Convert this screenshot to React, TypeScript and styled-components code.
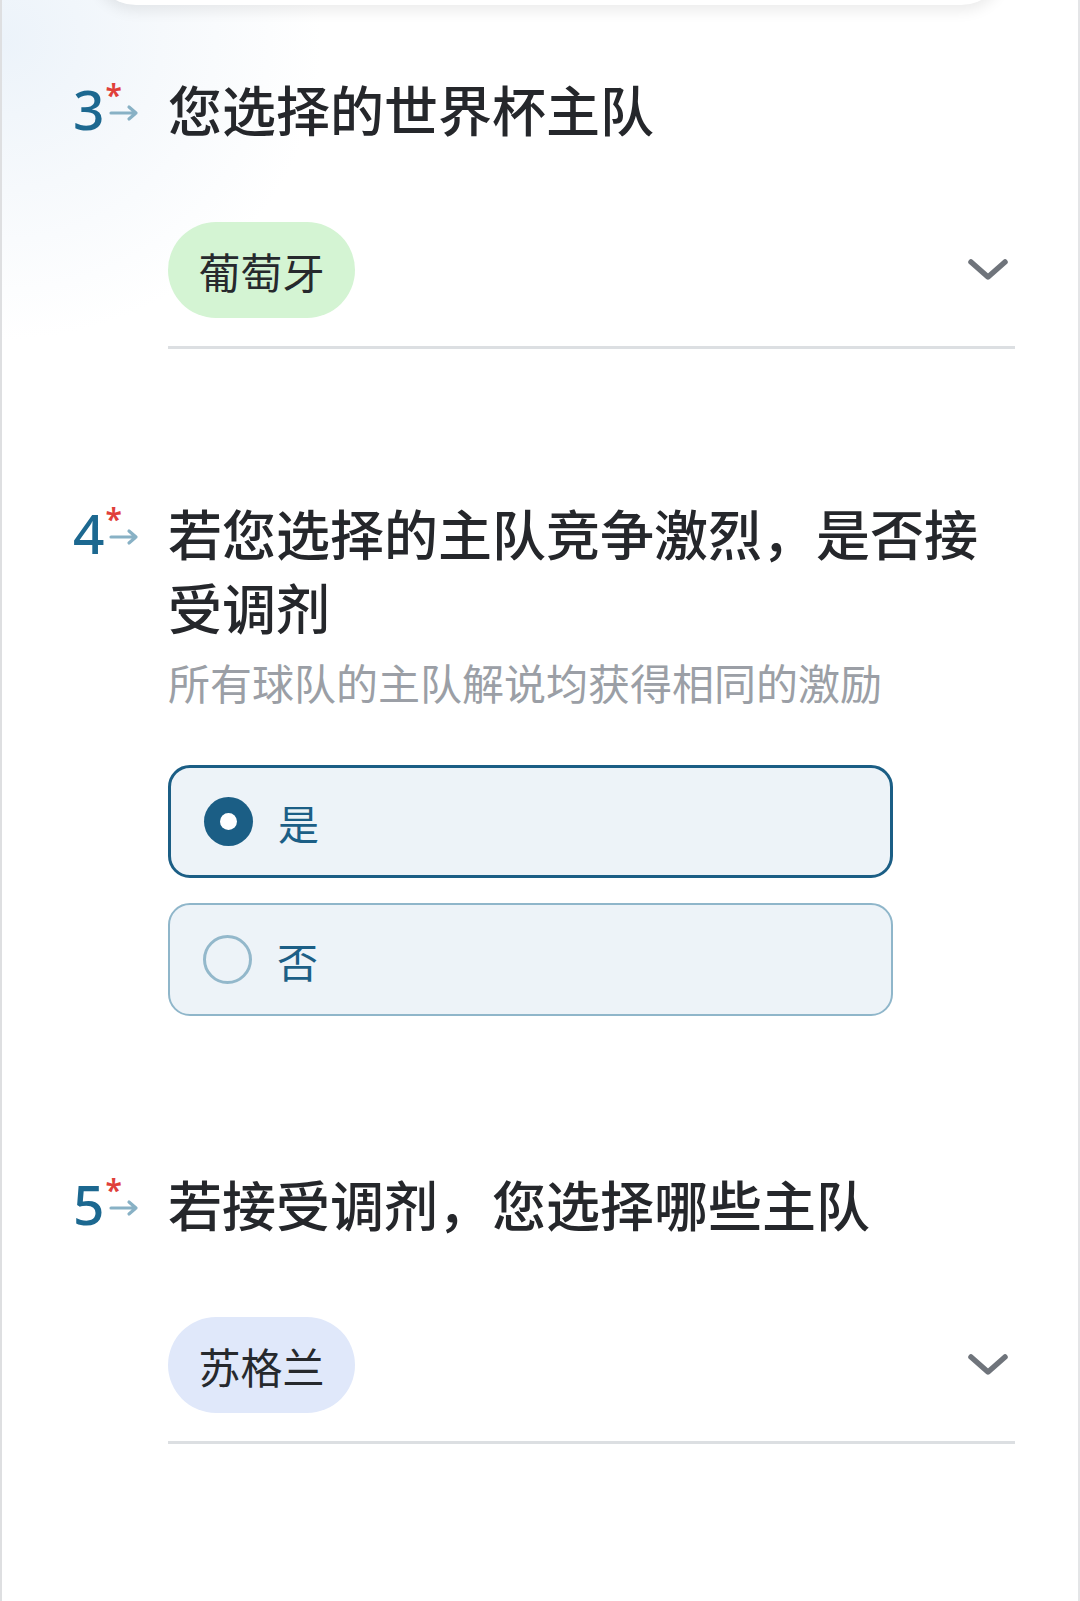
import React from 'react'
import styled, { createGlobalStyle } from 'styled-components'

const GlobalStyle = createGlobalStyle`
  html, body {
    margin: 0;
    padding: 0;
    background: #fff;
  }
  body {
    font-family: 'Noto Sans', 'Noto Sans CJK SC', sans-serif;
  }
`

const Page = styled.div`
  box-sizing: border-box;
  width: 1080px;
  height: 1601px;
  overflow: hidden;
  border-left: 2px solid #dedfe1;
  border-right: 2px solid #e4e5e7;
  background:
    radial-gradient(ellipse 320px 300px at 0 40px, #ecf3fa 0%, #f6f9fc 50%, rgba(255, 255, 255, 0) 100%),
    #fff;
  display: flex;
  flex-direction: column;
`

const TopCard = styled.div`
  margin: -42px 0 0 90px;
  width: 913px;
  height: 47px;
  background: #fff;
  border-radius: 0 0 44px 44px;
  box-shadow: 0 6px 14px rgba(0, 0, 0, 0.08);
  flex-shrink: 0;
`

const Section = styled.section<{ $top: number }>`
  display: grid;
  grid-template-columns: 95px 847px;
  padding: ${(p) => p.$top}px 0 0 71px;
  flex-shrink: 0;
`

const Marker = styled.div`
  display: flex;
  align-items: flex-start;
  height: 74px;
`

const Digit = styled.span`
  font-family: 'Noto Sans', sans-serif;
  font-size: 55px;
  line-height: 74px;
  font-weight: 500;
  color: #1c6890;
`

const Marks = styled.span`
  display: flex;
  flex-direction: column;
  padding: 8px 0 0 1px;
`

const Asterisk = styled.span`
  display: block;
  height: 24px;
  font-family: 'Noto Sans', sans-serif;
  font-size: 30px;
  line-height: 30px;
  font-weight: 600;
  color: #e0403a;
`

const ArrowBox = styled.span`
  display: block;
  margin-left: 3px;
`

const Body = styled.div`
  grid-column: 2;
`

const Title = styled.h2`
  grid-column: 2;
  margin: 0;
  font-family: 'Noto Sans CJK SC', 'Noto Sans', sans-serif;
  font-size: 54px;
  line-height: 74px;
  font-weight: 500;
  color: #25272b;
  min-height: 74px;
`

const Hint = styled.p`
  margin: 13px 0 0;
  font-family: 'Noto Sans CJK SC', sans-serif;
  font-size: 42px;
  line-height: 50px;
  color: #9b9fa6;
`

const SelectRow = styled.div`
  margin-top: 76px;
  display: flex;
  align-items: center;
  justify-content: space-between;
  padding: 0 6px 28px 0;
  border-bottom: 3px solid #dcdfe2;
`

const Chip = styled.span<{ $tone: 'green' | 'blue' }>`
  display: inline-flex;
  align-items: center;
  justify-content: center;
  width: 187px;
  height: 96px;
  border-radius: 48px;
  background: ${(p) => (p.$tone === 'green' ? '#d4f4d3' : '#e0e8fa')};
  font-family: 'Noto Sans CJK SC', sans-serif;
  font-size: 42px;
  color: #26292d;
`

const Options = styled.div`
  margin-top: 58px;
  display: flex;
  flex-direction: column;
  gap: 25px;
  width: 725px;
`

const Option = styled.label<{ $checked: boolean }>`
  box-sizing: border-box;
  display: flex;
  align-items: center;
  gap: 25px;
  height: 113px;
  padding-left: 33px;
  border-radius: 22px;
  border: ${(p) => (p.$checked ? '3px solid #1b5e85' : '2.5px solid #8fb6ca')};
  background: #edf3f8;
  font-family: 'Noto Sans CJK SC', sans-serif;
  font-size: 41px;
  color: #1c5f86;
`

const Radio = styled.span<{ $checked: boolean }>`
  box-sizing: border-box;
  width: 49px;
  height: 49px;
  border-radius: 50%;
  flex-shrink: 0;
  display: flex;
  align-items: center;
  justify-content: center;
  background: ${(p) => (p.$checked ? '#1b5e85' : 'transparent')};
  border: ${(p) => (p.$checked ? 'none' : '3px solid #93b8cb')};

  &::after {
    content: '';
    display: ${(p) => (p.$checked ? 'block' : 'none')};
    width: 17px;
    height: 17px;
    border-radius: 50%;
    background: #fff;
  }
`

const Arrow = () => (
  <svg width="32" height="18" viewBox="0 0 32 18" fill="none">
    <path
      d="M3 9H28M21 3L28 9L21 15"
      stroke="#88b1c5"
      strokeWidth="3.2"
      strokeLinecap="round"
      strokeLinejoin="round"
    />
  </svg>
)

const Chevron = () => (
  <svg width="42" height="26" viewBox="0 0 42 26" fill="none">
    <polyline
      points="4,5 21,20 38,5"
      stroke="#6f747b"
      strokeWidth="5.5"
      strokeLinecap="round"
      strokeLinejoin="round"
    />
  </svg>
)

const QuestionMarker = ({ n }: { n: number }) => (
  <Marker>
    <Digit>{n}</Digit>
    <Marks>
      <Asterisk>*</Asterisk>
      <ArrowBox>
        <Arrow />
      </ArrowBox>
    </Marks>
  </Marker>
)

const choices = [
  { label: '是', checked: true },
  { label: '否', checked: false },
]

export default function App() {
  return (
    <>
      <GlobalStyle />
      <Page>
        <TopCard />

        <Section $top={67}>
          <QuestionMarker n={3} />
          <Title>您选择的世界杯主队</Title>
          <Body>
            <SelectRow>
              <Chip $tone="green">葡萄牙</Chip>
              <Chevron />
            </SelectRow>
          </Body>
        </Section>

        <Section $top={147}>
          <QuestionMarker n={4} />
          <Title>若您选择的主队竞争激烈，是否接受调剂</Title>
          <Body>
            <Hint>所有球队的主队解说均获得相同的激励</Hint>
            <Options>
              {choices.map((c) => (
                <Option key={c.label} $checked={c.checked}>
                  <Radio $checked={c.checked} />
                  {c.label}
                </Option>
              ))}
            </Options>
          </Body>
        </Section>

        <Section $top={151}>
          <QuestionMarker n={5} />
          <Title>若接受调剂，您选择哪些主队</Title>
          <Body>
            <SelectRow>
              <Chip $tone="blue">苏格兰</Chip>
              <Chevron />
            </SelectRow>
          </Body>
        </Section>

        <Section $top={147}>
          <QuestionMarker n={6} />
          <Title />
        </Section>
      </Page>
    </>
  )
}
